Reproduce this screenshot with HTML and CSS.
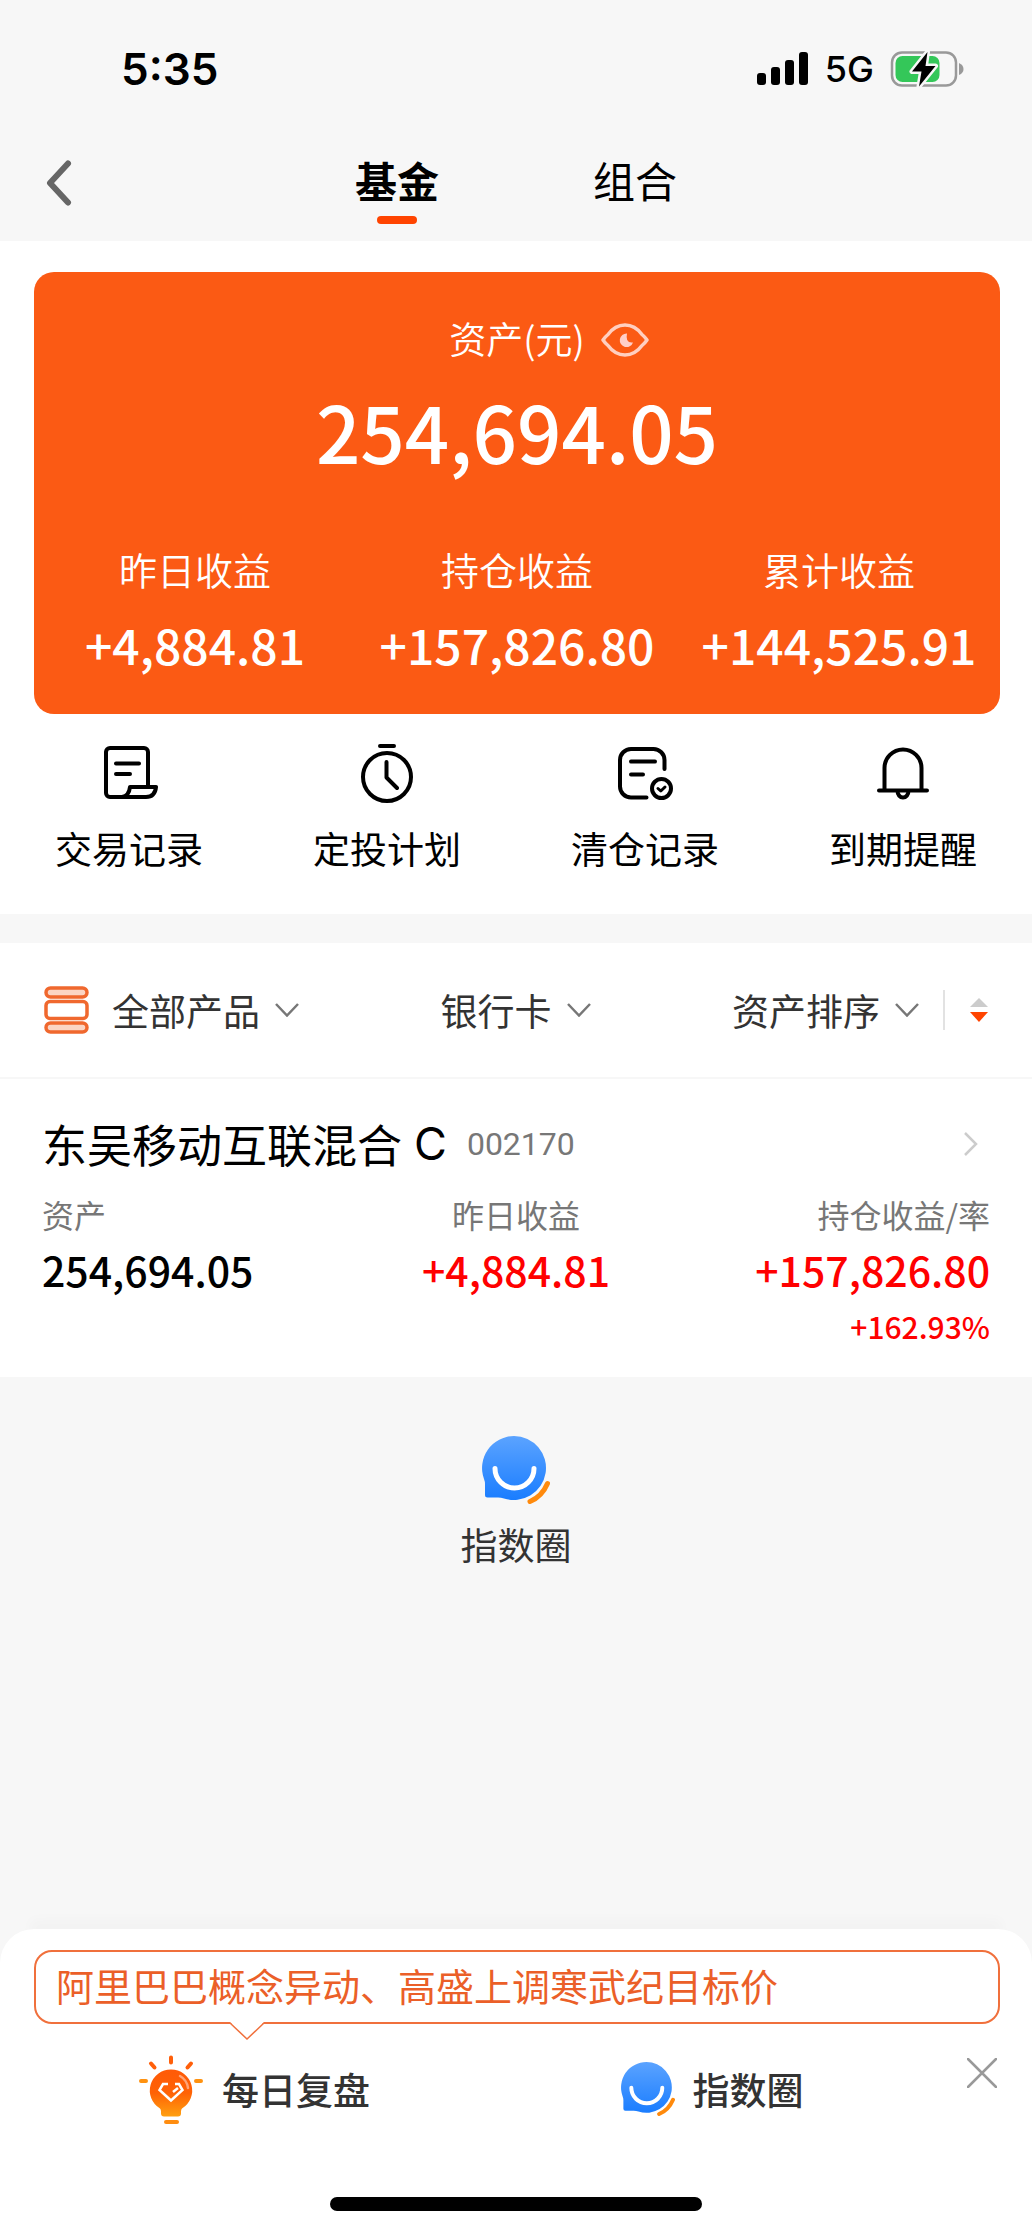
FILE: index.html
```html
<!DOCTYPE html>
<html lang="zh-CN">
<head>
<meta charset="utf-8">
<meta name="viewport" content="width=device-width, initial-scale=1">
<title>基金</title>
<link rel="stylesheet" href="styles.css">
</head>
<body>
<svg class="defs" aria-hidden="true">
  <defs>
    <linearGradient id="blue" x1="0" y1="0" x2="0" y2="1">
      <stop offset="0" stop-color="#5ba3ff"/><stop offset="1" stop-color="#1a7dff"/>
    </linearGradient>
    <linearGradient id="flame" x1="0" y1="0" x2="0" y2="1">
      <stop offset="0" stop-color="#ff5a08"/><stop offset=".5" stop-color="#ff6205"/><stop offset="1" stop-color="#ffa010"/>
    </linearGradient>
  </defs>
  <symbol id="circle-logo" viewBox="0 0 68 68">
    <path d="M32 0a32 32 0 1 1-10 62.400Q19 61.500 16 61.500H5.500A2.500 2.500 0 0 1 3 59V48Q3 45.500 2 43A32 32 0 0 1 32 0z" fill="url(#blue)"/>
    <path d="M13 32.500a19.500 19.500 0 0 0 39 0" fill="none" stroke="#fff" stroke-width="5" stroke-linecap="round"/>
    <path d="M65.500 47.500Q60 60.500 48 65.500" fill="none" stroke="#ff8a0c" stroke-width="5" stroke-linecap="round"/>
  </symbol>
  <symbol id="chevron" viewBox="0 0 24 14">
    <path d="M1 1l11 11.500L23 1" fill="none" stroke="#777" stroke-width="2.500"/>
  </symbol>
</svg>

<header class="top">
  <div class="status">
    <span class="clock">5:35</span>
    <div class="signals">
      <svg width="52" height="34" viewBox="0 0 52 34" aria-hidden="true">
        <rect x="0" y="21" width="9" height="12" rx="3"/><rect x="14" y="15" width="9" height="18" rx="3"/><rect x="28" y="8" width="9" height="25" rx="3"/><rect x="42" y="0" width="9" height="33" rx="3"/>
      </svg>
      <span class="network">5G</span>
      <svg width="74" height="38" viewBox="0 0 74 38" aria-hidden="true">
        <rect x="2" y="2.500" width="64" height="33" rx="10" fill="none" stroke="#999" stroke-width="2.500"/>
        <path d="M69 13q4.500 2 4.500 6t-4.500 6z" fill="#999"/>
        <rect x="5.500" y="6" width="44" height="26" rx="7" fill="#34c759"/>
        <path d="M37.500 2L22 21.500h9.500L29 36.500 45.500 16H35.500z" fill="#000" stroke="#f7f7f7" stroke-width="5" stroke-linejoin="round" paint-order="stroke"/>
      </svg>
    </div>
  </div>
  <nav class="nav">
    <button class="back" aria-label="返回">
      <svg width="26" height="46" viewBox="0 0 26 46"><path d="M22 3.500L4 23l18 19.500" fill="none" stroke="#666" stroke-width="6" stroke-linecap="round" stroke-linejoin="round"/></svg>
    </button>
    <div class="tabs">
      <button class="tab tab-on">基金</button>
      <button class="tab">组合</button>
    </div>
  </nav>
</header>

<main>
  <section class="overview">
    <div class="card">
      <div class="card-head">
        <span class="card-label">资产(元)</span>
        <button class="eye" aria-label="隐藏金额">
          <svg width="48" height="34" viewBox="0 0 48 34"><path d="M2 17Q4 14 7 11.500Q14 2 24 2T41 11.500Q44 14 46 17Q44 20 41 22.500Q34 32 24 32T7 22.500Q4 20 2 17z" fill="none" stroke="#ffcfc0" stroke-width="3.500" stroke-linejoin="round"/><path d="M26 10.500a6.800 6.800 0 1 0 6 9q-8 1-6-9z" fill="#ffcfc8"/></svg>
        </button>
      </div>
      <div class="total">254,694.05</div>
      <dl class="profits">
        <div><dt>昨日收益</dt><dd>+4,884.81</dd></div>
        <div><dt>持仓收益</dt><dd>+157,826.80</dd></div>
        <div><dt>累计收益</dt><dd>+144,525.91</dd></div>
      </dl>
    </div>
    <div class="shortcuts">
      <button class="shortcut">
        <svg viewBox="0 0 64 64"><path d="M51 46V11a4 4 0 0 0-4-4H13a4 4 0 0 0-4 4v41a4 4 0 0 0 4 4H49Q58 56 59 46H33Q32 55 25 56M19 22.500H42M19 33H33"/></svg>
        <span>交易记录</span>
      </button>
      <button class="shortcut">
        <svg viewBox="0 0 64 64"><circle cx="32" cy="36" r="24"/><path d="M25 5H39M31.500 21V36.500L42 47"/></svg>
        <span>定投计划</span>
      </button>
      <button class="shortcut">
        <svg viewBox="0 0 64 64"><path d="M51.500 28V19a11 11 0 0 0-11-11H18A11 11 0 0 0 7 19V45.500a11 11 0 0 0 11 11H33.500M18 20.500H42M18 33.500H30"/><circle cx="48.500" cy="47.500" r="9.500"/><path d="M45 47.500l2.800 2.500 4.200-4" stroke-width="3"/></svg>
        <span>清仓记录</span>
      </button>
      <button class="shortcut">
        <svg viewBox="0 0 64 64"><path d="M13.500 49V27a18.500 18.500 0 0 1 37 0V49M8 49.500H56M26.500 50a5.500 6.500 0 0 0 11 0"/></svg>
        <span>到期提醒</span>
      </button>
    </div>
  </section>

  <section class="holdings">
    <div class="filters">
      <label class="filter">
        <svg class="stack" width="45" height="48" viewBox="0 0 45 48" aria-hidden="true"><g fill="#fff" stroke="#f0682e" stroke-width="3.500"><rect x="2" y="2" width="41" height="9" rx="4.500" fill="#fbd5c4"/><rect x="2" y="15.500" width="41" height="17" rx="4"/><rect x="2" y="37" width="41" height="9" rx="4.500" fill="#fbd5c4"/></g></svg>
        <select aria-label="产品"><option>全部产品</option></select>
        <svg width="24" height="14"><use href="#chevron"/></svg>
      </label>
      <label class="filter">
        <select aria-label="支付方式"><option>银行卡</option></select>
        <svg width="24" height="14"><use href="#chevron"/></svg>
      </label>
      <div class="sorting">
        <label class="filter">
          <select aria-label="排序"><option>资产排序</option></select>
          <svg width="24" height="14"><use href="#chevron"/></svg>
        </label>
        <button class="order" aria-label="切换升降序">
          <svg width="20" height="24" viewBox="0 0 20 24"><path d="M10 0l9 9H1z" fill="#ccc"/><path d="M10 24l9-10H1z" fill="#ff4400"/></svg>
        </button>
      </div>
    </div>

    <article class="fund">
      <a class="fund-title" href="#fund">
        <span class="fund-name">东吴移动互联混合</span><span class="fund-class">C</span>
        <span class="fund-code">002170</span>
        <svg width="16" height="26" viewBox="0 0 16 26" aria-hidden="true"><path d="M2 2l11 11L2 24" fill="none" stroke="#ccc" stroke-width="2.500"/></svg>
      </a>
      <table class="figures">
        <thead><tr><th>资产</th><th>昨日收益</th><th>持仓收益/率</th></tr></thead>
        <tbody>
          <tr><td>254,694.05</td><td class="gain">+4,884.81</td><td class="gain">+157,826.80</td></tr>
          <tr class="rate"><td></td><td></td><td class="gain">+162.93%</td></tr>
        </tbody>
      </table>
    </article>
  </section>

  <a class="community" href="#circle">
    <svg width="68" height="68"><use href="#circle-logo"/></svg>
    <span>指数圈</span>
  </a>
</main>

<footer class="sheet">
  <a class="bubble" href="#news">阿里巴巴概念异动、高盛上调寒武纪目标价
    <svg class="tip" width="36" height="18" viewBox="0 0 36 18" aria-hidden="true"><path d="M1 0H35L18 17z" fill="#fff"/><path d="M1 1l17 16L35 1" fill="none" stroke="#f0703c" stroke-width="1.500"/></svg>
  </a>
  <div class="actions">
    <a class="action" href="#review">
      <svg width="66" height="70" viewBox="0 0 66 70" aria-hidden="true">
        <path d="M33 15.500a21 21 0 0 1 11 39q-1 1-1 3v2a3 3 0 0 1-3 3H26a3 3 0 0 1-3-3v-2q0-2-1-3a21 21 0 0 1 11-39z" fill="url(#flame)"/>
        <g fill="none" stroke-linecap="round" stroke-width="4">
          <path d="M33 3.500V8.500M13 9.500l3.500 4M53 9.500l-3.500 4" stroke="#ff5f0a"/>
          <path d="M3 27H8M58 27H63" stroke="#ff9210"/><path d="M28 68H39" stroke="#ff8d10"/>
        </g>
        <path d="M30 30h-5l-3.500 6L33 46.500 44.500 36 41 30h-4M35 38l5-4" fill="none" stroke="#fff" stroke-width="2.500"/>
        <path d="M42 22q7 4 8 12" fill="none" stroke="#ffa477" stroke-width="2.500" stroke-linecap="round"/>
      </svg>
      <span>每日复盘</span>
    </a>
    <a class="action" href="#circle">
      <svg width="54" height="54"><use href="#circle-logo"/></svg>
      <span>指数圈</span>
    </a>
    <button class="close" aria-label="关闭">
      <svg width="30" height="30" viewBox="0 0 30 30"><path d="M1 1l28 28M29 1L1 29" stroke="#999" stroke-width="2.500" stroke-linecap="round"/></svg>
    </button>
  </div>
  <div class="home-bar"></div>
</footer>
</body>
</html>
```

FILE: styles.css
```css
* {
  box-sizing: border-box;
}

body {
  margin: 0;
  min-height: 100vh;
  display: flex;
  flex-direction: column;
  background: #f7f7f7;
  color: #000;
  font-family: "Noto Sans CJK SC", sans-serif;
  font-size: 37px;
  line-height: 48px;
}

button,
select {
  appearance: none;
  border: 0;
  padding: 0;
  margin: 0;
  background: none;
  color: inherit;
  font: inherit;
}

a {
  color: inherit;
  text-decoration: none;
}

svg {
  display: block;
  flex: none;
}

.defs {
  position: absolute;
  width: 0;
  height: 0;
}

/* Status bar and tabs */

.status {
  height: 138px;
  padding: 0 68px 0 121px;
  display: flex;
  align-items: center;
  justify-content: space-between;
  font-family: Inter, sans-serif;
}

.clock {
  font-size: 44px;
  font-weight: 600;
}

.signals {
  display: flex;
  align-items: center;
  gap: 16px;
}

.network {
  font-size: 36px;
  font-weight: 500;
}

.nav {
  height: 103px;
  padding-bottom: 13px;
  display: grid;
  grid-template-columns: 1fr auto 1fr;
  align-items: center;
}

.back {
  justify-self: start;
  padding-left: 46px;
}

.tabs {
  display: flex;
  gap: 154px;
}

.tab {
  position: relative;
  padding-bottom: 6px;
  font-size: 42px;
  line-height: 60px;
}

.tab-on {
  font-weight: 700;
}

.tab-on::after {
  content: "";
  position: absolute;
  left: 50%;
  bottom: -8px;
  width: 40px;
  height: 8px;
  margin-left: -20px;
  border-radius: 4px;
  background: #ff4400;
}

/* Asset card */

.overview {
  padding: 31px 0 42px;
  background: #fff;
}

.card {
  margin: 0 32px 0 34px;
  padding: 42px 0;
  border-radius: 20px;
  background: #fb5a14;
  color: #fff;
}

.card-head {
  display: grid;
  grid-template-columns: 1fr auto 1fr;
  align-items: center;
  column-gap: 16px;
}

.card-label {
  grid-column: 2;
  font-size: 37px;
  font-weight: 350;
}

.eye {
  justify-self: start;
  padding-top: 3px;
}

.total {
  margin-top: 20px;
  text-align: center;
  font-size: 78px;
  font-weight: 500;
  line-height: 96px;
}

.profits {
  margin: 67px 0 0;
  display: grid;
  grid-template-columns: repeat(3, 1fr);
  text-align: center;
}

.profits dt {
  font-size: 38px;
  font-weight: 350;
}

.profits dd {
  margin: 23px 0 0;
  font-size: 48px;
  font-weight: 500;
  line-height: 56px;
}

.shortcuts {
  margin-top: 27px;
  display: grid;
  grid-template-columns: repeat(4, 1fr);
}

.shortcut {
  display: flex;
  flex-direction: column;
  align-items: center;
  gap: 19px;
}

.shortcut svg {
  width: 64px;
  height: 64px;
  fill: none;
  stroke: #000;
  stroke-width: 4;
  stroke-linecap: round;
  stroke-linejoin: round;
}

/* Holdings */

.holdings {
  margin-top: 29px;
  background: #fff;
}

.filters {
  height: 136px;
  padding: 0 43px 0 44px;
  display: flex;
  align-items: center;
  justify-content: space-between;
  border-bottom: 2px solid #f7f7f7;
  color: #333;
}

.filter,
.sorting {
  display: flex;
  align-items: center;
}

.filter {
  gap: 15px;
}

.stack {
  margin-right: 8px;
}

.order {
  height: 40px;
  margin-left: 24px;
  padding-left: 24px;
  border-left: 2px solid #e2e2e2;
}

.fund {
  padding: 33px 42px 25px;
}

.fund-title {
  display: flex;
  align-items: center;
  font-size: 45px;
  line-height: 64px;
}

.fund-class {
  margin-left: 12px;
  font-family: Inter, sans-serif;
}

.fund-code {
  margin: 0 auto 0 20px;
  color: #777;
  font-family: Roboto, sans-serif;
  font-size: 32px;
}

.fund-title svg {
  margin-right: 11px;
}

.figures {
  width: 100%;
  margin-top: 14px;
  table-layout: fixed;
  border-collapse: collapse;
  text-align: center;
}

.figures th,
.figures td {
  padding: 0;
}

.figures th {
  color: #777;
  font-size: 32px;
  font-weight: 400;
}

.figures td {
  padding-top: 1px;
  font-size: 41px;
  font-weight: 500;
  line-height: 60px;
}

.figures .rate td {
  font-size: 30px;
  line-height: 52px;
}

.figures :first-child:is(th, td) {
  text-align: left;
}

.figures :last-child:is(th, td) {
  text-align: right;
}

.figures .gain {
  color: #ff0000;
}

.community {
  padding-top: 59px;
  display: flex;
  flex-direction: column;
  align-items: center;
  gap: 16px;
  color: #333;
}

/* Bottom sheet */

.sheet {
  margin-top: auto;
  padding: 21px 0 22px;
  border-radius: 34px 34px 0 0;
  background: #fff;
  box-shadow: 0 -40px 12px -30px rgba(0, 0, 0, 0.02);
}

.bubble {
  position: relative;
  display: block;
  margin: 0 32px 0 34px;
  padding: 0 20px 4px;
  border: 2px solid #f0703c;
  border-radius: 18px;
  color: #eb5f28;
  font-size: 38px;
  line-height: 66px;
}

.tip {
  position: absolute;
  top: 100%;
  left: 193px;
}

.actions {
  height: 130px;
  padding: 0 9px 0 25px;
  display: grid;
  grid-template-columns: 1fr 1fr 82px;
  align-items: center;
}

.action {
  display: flex;
  align-items: center;
  justify-content: center;
  gap: 18px;
  color: #333;
  font-weight: 500;
}

.close {
  align-self: start;
  justify-self: center;
  padding-top: 34px;
}

.home-bar {
  width: 36%;
  height: 14px;
  margin: 43px auto 0;
  border-radius: 7px;
  background: #000;
}
```
